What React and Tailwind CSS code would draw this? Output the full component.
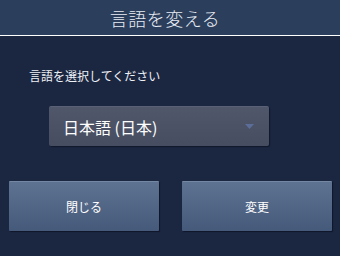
import React from 'react';

export default function App() {
  return (
    <div
      className="w-[340px] h-[256px] overflow-hidden bg-[#1b2641] text-white"
      style={{ fontFamily: '"Noto Sans CJK JP", "Noto Sans", sans-serif' }}
    >
      {/* ヘッダー */}
      <div className="h-[36px] bg-[#2b3e5c] border-b border-white flex items-center justify-center">
        <h1 className="text-[18px] leading-[20px] text-[#e8ecf4] font-light tracking-[0.5px] ml-[-10px]">言語を変える</h1>
      </div>

      <div className="pt-[32px]">
        <p className="pl-[29px] text-[12px] leading-[16px] text-[#eef1f6]">言語を選択してください</p>

        {/* ドロップダウン */}
        <div className="ml-[49px] mt-[22px] w-[220px] h-[40px] rounded-[2px] bg-gradient-to-b from-[#50576b] to-[#464d60] border-t border-[#5a6176] shadow-[1px_1px_1px_rgba(10,15,30,0.6)] flex items-center justify-between pl-[14px] pr-[15px]">
          <span className="text-[16px] leading-[20px] text-white">日本語 (日本)</span>
          <svg width="9" height="5" viewBox="0 0 9 5">
            <path d="M0 0 H9 L4.5 5 Z" fill="#5c6d99" />
          </svg>
        </div>

        {/* ボタン */}
        <div className="mt-[35px] flex gap-[23px] pl-[9px]">
          <button className="w-[150px] h-[50px] rounded-[1px] bg-gradient-to-b from-[#5e7292] to-[#45597a] border-t border-[#7487a3] shadow-[1px_1px_1px_rgba(10,15,30,0.7)] text-[12px] text-white">
            閉じる
          </button>
          <button className="w-[150px] h-[50px] rounded-[1px] bg-gradient-to-b from-[#5e7292] to-[#45597a] border-t border-[#7487a3] shadow-[1px_1px_1px_rgba(10,15,30,0.7)] text-[12px] text-white">
            変更
          </button>
        </div>
      </div>
    </div>
  );
}
